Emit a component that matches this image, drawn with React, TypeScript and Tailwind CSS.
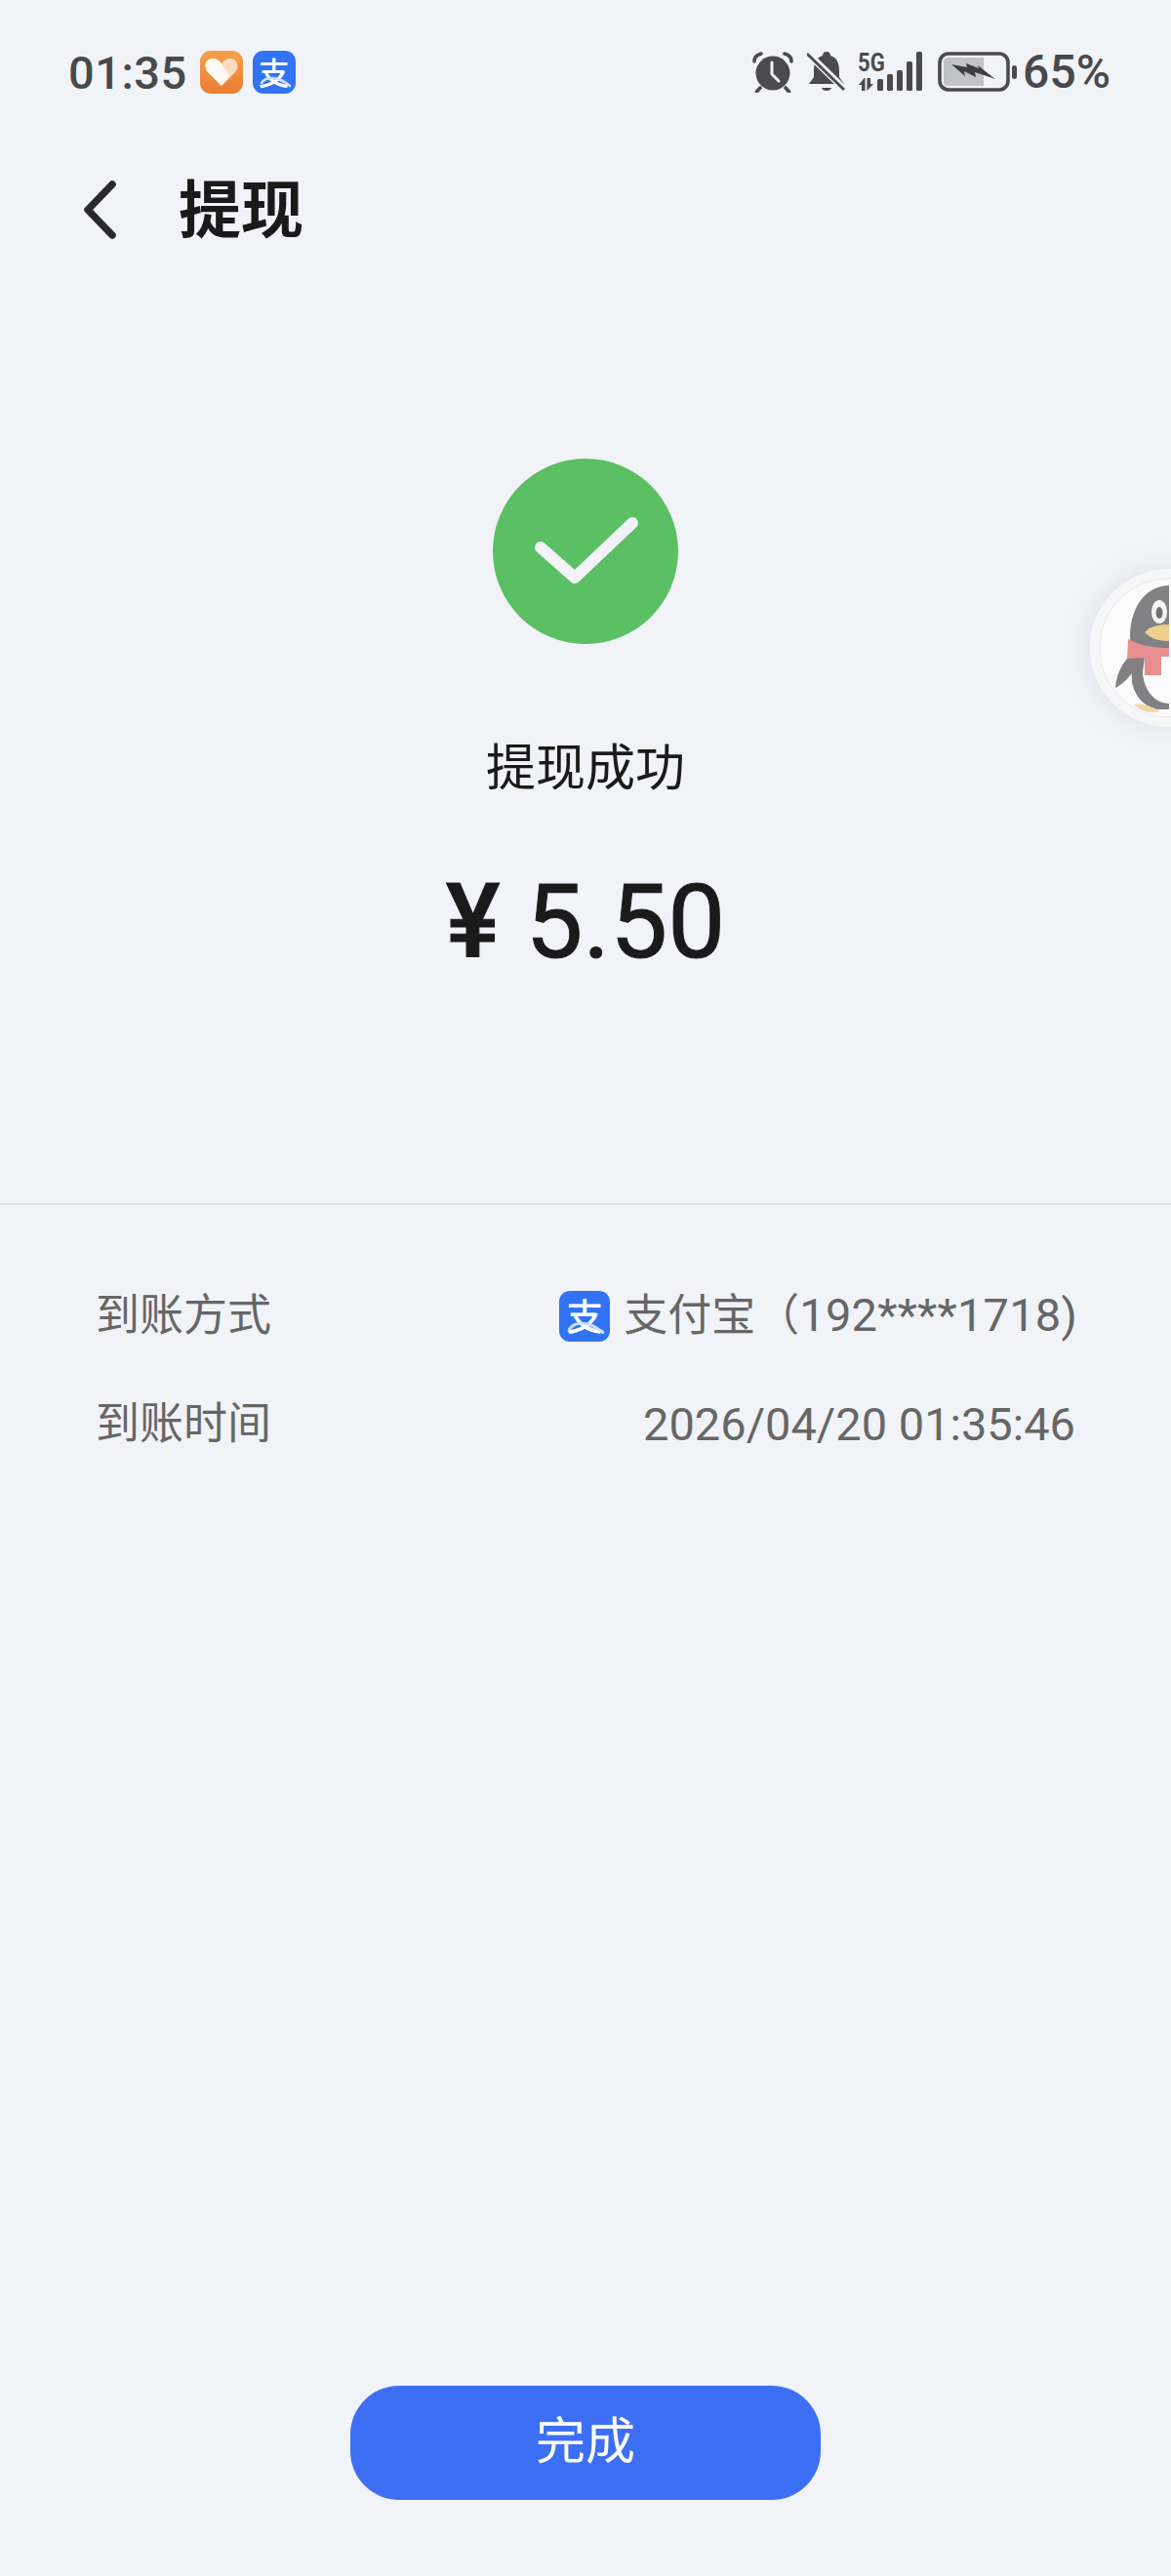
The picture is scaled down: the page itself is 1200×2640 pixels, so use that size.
const fontStack = "font-['Roboto','Noto_Sans_CJK_SC',sans-serif]";

const AlipayBadge = ({ className }: { className: string }) => (
  <div className={`relative flex items-center justify-center bg-[#3173f2] text-white font-['Noto_Sans_CJK_SC',sans-serif] font-medium ${className}`}>
    <span className="-mt-[3px]">支</span>
    <svg className="absolute inset-0 w-full h-full" viewBox="0 0 44 44" fill="none">
      <path d="M9 33 C14 26 26 26 38 36" stroke="#cfe0fb" strokeWidth="2.6" strokeLinecap="round" />
    </svg>
  </div>
);

const HeartBadge = () => (
  <div className="w-[44px] h-[44px] rounded-[11px] bg-gradient-to-b from-[#f5a14c] to-[#ea7c32] flex items-center justify-center">
    <svg width="36" height="34" viewBox="0 0 36 34">
      <path d="M18 31 L4 17 C-1 11 2 3 9 3 C13 3 16 5 18 8 C20 5 23 3 27 3 C34 3 37 11 32 17 Z" fill="#fbdcc0" />
      <path d="M18 31 L4 17 C-1 11 2 3 9 3 C13 3 16 5 18 8 L26 21 Z" fill="#fff8f2" />
    </svg>
  </div>
);

const AlarmIcon = () => (
  <svg width="42" height="42" viewBox="0 0 42 42" fill="none">
    <circle cx="21" cy="22" r="17.5" fill="#4a4a4f" />
    <path d="M2 10 C2 6 5 3 9 2 M40 10 C40 6 37 3 33 2 M8 37 L4.5 41 M34 37 L37.5 41" stroke="#4a4a4f" strokeWidth="3.6" strokeLinecap="round" />
    <path d="M20 11 V23 L27 30" stroke="#f1f3f8" strokeWidth="3" strokeLinecap="round" strokeLinejoin="round" />
  </svg>
);

const MuteBellIcon = () => (
  <svg width="40" height="42" viewBox="0 0 40 42" fill="none">
    <path d="M20 0 C23 0 24 2 24 4 C31 6 33 12 33 20 V26 L38 33 H2 L7 26 V20 C7 12 9 6 16 4 C16 2 17 0 20 0 Z" fill="#4a4a4f" />
    <path d="M15 37 H25 C24 41 16 41 15 37 Z" fill="#4a4a4f" />
    <path d="M0 1 L38 38" stroke="#f1f3f8" strokeWidth="7" />
    <path d="M0 2 L38 39" stroke="#4a4a4f" strokeWidth="2.8" />
  </svg>
);

const SignalIcon = () => (
  <div className="relative w-[68px] h-[42px]">
    <span className="absolute left-0 -top-[2px] text-[26px] leading-[26px] font-bold text-[#4a4a4f] origin-left scale-x-[0.85]">5G</span>
    <svg width="68" height="42" viewBox="0 0 68 42">
      <path d="M6.5 27 L1 34 H4 V40 H7.5 V27 Z M9.5 27 V40 L16 33 H13 V27 Z" fill="#4a4a4f" />
      <rect x="20" y="28" width="6" height="12" rx="1.5" fill="#4a4a4f" />
      <rect x="30" y="23" width="6" height="17" rx="1.5" fill="#4a4a4f" />
      <rect x="40" y="19" width="6" height="21" rx="1.5" fill="#4a4a4f" />
      <rect x="50" y="10" width="6" height="30" rx="1.5" fill="#4a4a4f" />
      <rect x="60" y="0" width="6" height="40" rx="1.5" fill="#4a4a4f" />
    </svg>
  </div>
);

const BatteryIcon = () => (
  <svg width="82" height="42" viewBox="0 0 82 42" fill="none">
    <rect x="2" y="2" width="70" height="37" rx="9" stroke="#4a4a4f" strokeWidth="3.6" />
    <path d="M10 6 H47 V35 H10 C7 35 6 33 6 31 V10 C6 8 7 6 10 6 Z" fill="#c2c3c6" />
    <path d="M14 13 L30 16 L29 12 L42 17 L41 14 L59 28 L38 21 L39 26 L27 20 L28 25 Z" fill="#3e3e42" />
    <rect x="76" y="14" width="5" height="14" rx="2.5" fill="#4a4a4f" />
  </svg>
);

const Penguin = () => (
  <div className="absolute left-[1117px] top-[583px] w-[162px] h-[162px] rounded-full bg-[#f7f7f9] shadow-[0_0_26px_rgba(190,195,210,0.35)] flex items-center justify-center">
    <svg width="162" height="162" viewBox="0 0 162 162" fill="none">
      <circle cx="81" cy="81" r="71" fill="#fbfbfc" stroke="#eeeef1" strokeWidth="1.5" />
      <path d="M41 70 C41 36 60 17 81 17 V144 H70 C58 143 46 132 43 116 L42 90 Z" fill="#818184" />
      <path d="M56 90 H81 V138 C66 138 55 124 54 106 Z" fill="#fbfbfc" />
      <path d="M42 88 C33 96 27 108 26 122 C33 118 40 112 44 105 Z" fill="#818184" />
      <ellipse cx="71" cy="44" rx="8" ry="12" fill="#f4f4f5" />
      <ellipse cx="71" cy="45" rx="3.5" ry="6" fill="#707073" />
      <path d="M56 65 C62 58 72 57 81 57 V74 C72 74 62 72 56 65 Z" fill="#efcf8d" />
      <path d="M39 72 C52 79 66 81 81 81 V90 H73 V109 H56 V91 L38 92 Z" fill="#e98f92" />
      <path d="M45 139 C55 137 64 142 72 146 C62 149 51 146 45 139 Z" fill="#efd9a9" />
    </svg>
  </div>
);

const BackArrow = () => (
  <svg width="36" height="60" viewBox="0 0 36 60" fill="none">
    <path d="M31 4 L6 30 L31 56" stroke="#2a2a2c" strokeWidth="7.5" strokeLinecap="round" strokeLinejoin="round" />
  </svg>
);

const CheckCircle = () => (
  <div className="w-[190px] h-[190px] rounded-full bg-[#5bbf63] flex items-center justify-center">
    <svg width="190" height="190" viewBox="0 0 190 190" fill="none">
      <path d="M49 91 L84 122 L143 66" stroke="#f1f3f8" strokeWidth="12" strokeLinecap="round" strokeLinejoin="round" />
    </svg>
  </div>
);

const App = () => {
  return (
    <div className={`relative w-[1200px] h-[2640px] overflow-hidden flex flex-col bg-[#f1f3f8] ${fontStack}`}>
      {/* Status bar */}
      <div className="h-[146px] pl-[70px] pr-[62px] pt-[52px] flex justify-between items-start">
        <div className="flex items-center h-[44px]">
          <span className="text-[47px] leading-none font-medium text-[#48494d] tracking-[0.5px]">01:35</span>
          <div className="ml-[13px] flex gap-[10px]">
            <HeartBadge />
            <AlipayBadge className="w-[44px] h-[44px] rounded-[11px] text-[32px]" />
          </div>
        </div>
        <div className="flex items-center h-[44px]">
          <AlarmIcon />
          <div className="ml-[14px]"><MuteBellIcon /></div>
          <div className="ml-[12px]"><SignalIcon /></div>
          <div className="ml-[14px]"><BatteryIcon /></div>
          <span className="ml-[5px] text-[48px] leading-none font-medium text-[#48494d]">65%</span>
        </div>
      </div>

      {/* Header */}
      <div className="h-[136px] pl-[84px] pt-[5px] flex items-center">
        <div className="-mt-[3px]"><BackArrow /></div>
        <h1 className="ml-[63px] text-[64px] leading-none font-bold text-[#1a1a1a]">提现</h1>
      </div>

      {/* Result */}
      <div className="pt-[188px] h-[953px] flex flex-col items-center border-b-2 border-[#dddee4]">
        <CheckCircle />
        <p className="mt-[102px] text-[51px] leading-none text-[#1a1a1a]">提现成功</p>
        <p className="mt-[80px] text-[105px] leading-none font-normal text-[#1a1a1a] whitespace-pre [-webkit-text-stroke:1px_#1a1a1a]">
          <span className="font-medium">¥</span> 5.50
        </p>
      </div>

      {/* Details */}
      <div className="px-[98px] pt-[87px] flex flex-col gap-[59px] text-[45px] leading-[52px] text-[#666666]">
        <div className="flex justify-between items-center">
          <span>到账方式</span>
          <div className="flex items-center -mr-[2px]">
            <AlipayBadge className="w-[52px] h-[52px] rounded-[11px] text-[38px]" />
            <span className="ml-[14px]">支付宝（<span className="text-[47px] tracking-[0.2px]">192****1718)</span></span>
          </div>
        </div>
        <div className="flex justify-between items-center">
          <span>到账时间</span>
          <span className="text-[47px]">2026/04/20 01:35:46</span>
        </div>
      </div>

      {/* Done button */}
      <div className="mt-auto pb-[78px] flex justify-center">
        <button className="w-[482px] h-[117px] rounded-[50px] bg-[#3d6ff5] text-white text-[51px] font-normal">完成</button>
      </div>

      <Penguin />
    </div>
  );
};

export default App;
